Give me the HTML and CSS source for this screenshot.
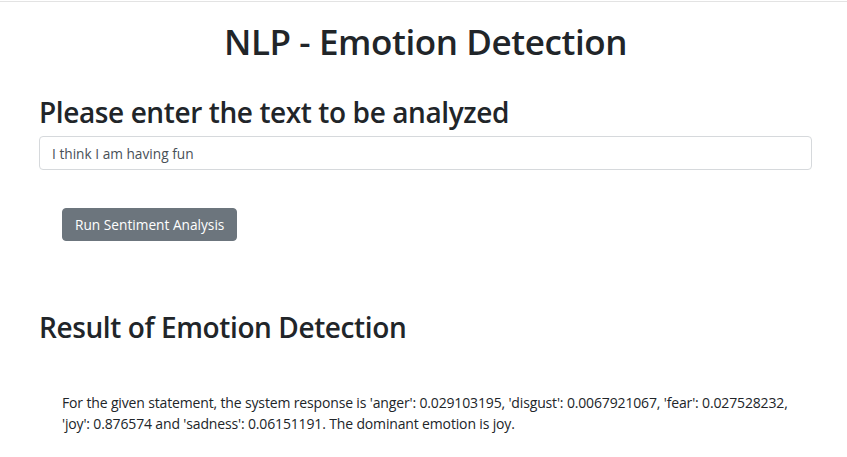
FILE: index.html
```html
<!DOCTYPE html>
<html>
<head>
<meta charset="utf-8">
<link rel="stylesheet" href="styles.css">
</head>
<body>
<div class="topline"></div>
<main class="container">
  <h1 class="title">NLP - Emotion Detection</h1>
  <h2 class="prompt">Please enter the text to be analyzed</h2>
  <input class="text-input" type="text" value="I think I am having fun">
  <div class="actions">
    <button class="btn">Run Sentiment Analysis</button>
  </div>
  <h2 class="result-title">Result of Emotion Detection</h2>
  <p class="result">For the given statement, the system response is 'anger': 0.029103195, 'disgust': 0.0067921067, 'fear': 0.027528232, 'joy': 0.876574 and 'sadness': 0.06151191. The dominant emotion is joy.</p>
</main>
</body>
</html>
```
FILE: styles.css
```css
* { box-sizing: border-box; }
html, body { margin: 0; padding: 0; background: #fff; }
body {
  font-family: "Open Sans", "Noto Sans", sans-serif;
  color: #212529;
}
.topline {
  height: 2px;
  border-top: 1px solid #e3e3e3;
  margin-top: 1px;
}
.container {
  padding: 0 35px 0 39px;
}
.title {
  margin: 17px 0 0;
  text-align: center;
  font-size: 35px;
  font-weight: 600;
  line-height: 44px;
  letter-spacing: -0.4px;
}
.prompt {
  margin: 30px 0 0;
  font-size: 28px;
  font-weight: 600;
  line-height: 36px;
  letter-spacing: -0.4px;
}
.text-input {
  display: block;
  width: 100%;
  height: 34px;
  margin-top: 6px;
  padding: 0 12px;
  border: 1px solid #d6d9dc;
  border-radius: 4px;
  font-family: inherit;
  font-size: 13.7px;
  color: #495057;
}
.actions {
  display: flex;
  margin-top: 38px;
  padding-left: 23px;
}
.btn {
  height: 33px;
  padding: 0 12px;
  border: 1px solid #6c757d;
  border-radius: 4px;
  background: #6c757d;
  color: #fff;
  font-family: inherit;
  font-size: 13.7px;
}
.result-title {
  margin: 68px 0 0;
  font-size: 28px;
  font-weight: 600;
  line-height: 36px;
  letter-spacing: -0.4px;
}
.result {
  margin: 47px 0 0;
  padding-left: 23px;
  font-size: 14px;
  line-height: 21px;
  letter-spacing: -0.15px;
  color: #212529;
}
```
